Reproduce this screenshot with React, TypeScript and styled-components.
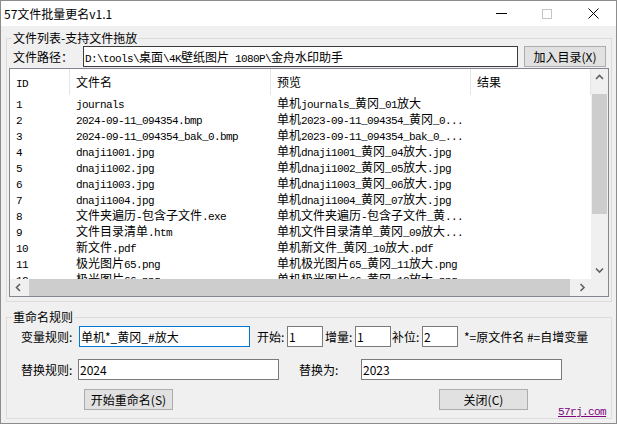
import styled, { createGlobalStyle } from "styled-components";

const GlobalStyle = createGlobalStyle`
  html, body {
    margin: 0;
    padding: 0;
    background: #fff;
  }
  body {
    font-family: "Noto Sans CJK SC", "Noto Sans", sans-serif;
    font-size: 12px;
    color: #000;
  }
  * {
    box-sizing: border-box;
  }
`;

const CJK_RE = /([\u3000-\u9fff\uff00-\uffef]+)/;

const Window = styled.div`
  width: 617px;
  height: 424px;
  border: 1px solid #8c8c8c;
  background: #f0f0f0;
  display: flex;
  flex-direction: column;
  overflow: hidden;
`;

const TitleBar = styled.div`
  height: 25px;
  flex: none;
  background: #fff;
  display: flex;
  align-items: center;
  padding-left: 3px;
`;

const Title = styled.div`
  flex: 1;
  font-size: 12px;
  line-height: 25px;
`;

const Ctrl = styled.div`
  width: 46px;
  height: 25px;
  display: flex;
  align-items: center;
  justify-content: center;
`;

const Body = styled.div`
  flex: 1;
  display: flex;
  flex-direction: column;
  padding: 5px 4px 4px 5px;
`;

const Group = styled.fieldset<{ $mt?: number }>`
  margin: ${(p) => p.$mt ?? 0}px 0 0;
  padding: 0 1px;
  min-width: 0;
  border: 1px solid #dcdcdc;
`;

const Legend = styled.legend`
  margin-left: 4px;
  padding: 0 1px;
  font-size: 12px;
  line-height: 14px;
`;

const Row = styled.div<{ $mt: number; $pl?: number; $h?: number }>`
  display: flex;
  align-items: center;
  height: ${(p) => p.$h ?? 21}px;
  margin-top: ${(p) => p.$mt}px;
  padding-left: ${(p) => p.$pl ?? 0}px;
`;

const Label = styled.span<{ $w?: number; $ml?: number }>`
  flex: none;
  width: ${(p) => (p.$w ? `${p.$w}px` : "auto")};
  margin-left: ${(p) => p.$ml ?? 0}px;
  line-height: 21px;
  white-space: nowrap;
`;

const PathField = styled.div`
  width: 435px;
  height: 21px;
  border: 1px solid #3c3c3c;
  background: #fff;
  padding: 0 1px;
  line-height: 19px;
  white-space: nowrap;
  overflow: hidden;
`;

const Edit = styled.input<{ $w: number; $ml?: number; $focus?: boolean }>`
  flex: none;
  width: ${(p) => p.$w}px;
  height: 21px;
  margin: 0 0 0 ${(p) => p.$ml ?? 0}px;
  padding: 0 1px;
  border: 1px solid ${(p) => (p.$focus ? "#0078d7" : "#7a7a7a")};
  background: #fff;
  font-family: "Noto Sans CJK SC", sans-serif;
  font-size: 12px;
  color: #000;
  outline: none;
`;

const Button = styled.button<{ $w: number; $ml?: number }>`
  flex: none;
  width: ${(p) => p.$w}px;
  height: 21px;
  margin-left: ${(p) => p.$ml ?? 0}px;
  padding: 0;
  border: 1px solid #adadad;
  background: #e1e1e1;
  font-family: "Noto Sans CJK SC", sans-serif;
  font-size: 12px;
  color: #000;
`;

const Cjk = styled.span`
  font-family: "Noto Sans CJK SC", sans-serif;
  font-size: 12px;
  letter-spacing: 0;
`;

const Mono = styled.span`
  font-family: "Liberation Mono", monospace;
  font-size: 11px;
  letter-spacing: -0.6px;
`;

const ListBox = styled.div`
  margin: 1px 1px 0;
  height: 229px;
  border: 1px solid #828790;
  background: #fff;
  display: grid;
  grid-template-columns: 1fr 17px;
  grid-template-rows: 1fr 17px;
`;

const ListMain = styled.div`
  overflow: hidden;
`;

const Cols = styled.div<{ $h: number }>`
  display: grid;
  grid-template-columns: 60px 201px 200px 1fr;
  height: ${(p) => p.$h}px;
`;

const HeadCell = styled.div`
  padding-left: 6px;
  border-right: 1px solid #e5e5e5;
  line-height: 26px;
  white-space: nowrap;
  overflow: hidden;
`;

const Cell = styled.div`
  padding-left: 6px;
  line-height: 16px;
  white-space: nowrap;
  overflow: hidden;
`;

const VScroll = styled.div`
  background: #f0f0f0;
  display: flex;
  flex-direction: column;
`;

const HScroll = styled.div`
  background: #f0f0f0;
  display: flex;
  align-items: stretch;
`;

const Corner = styled.div`
  background: #f0f0f0;
`;

const ArrowBtn = styled.div<{ $size: number }>`
  flex: none;
  width: 17px;
  height: ${(p) => p.$size}px;
  display: flex;
  align-items: center;
  justify-content: center;
`;

const HArrowBtn = styled(ArrowBtn)`
  width: ${(p) => p.$size}px;
  height: 17px;
`;

const Track = styled.div`
  flex: 1;
  display: flex;
`;

const VThumb = styled.div`
  width: 15px;
  margin: 8px 1px 0;
  background: #cdcdcd;
`;

const HThumb = styled.div`
  margin-left: 2px;
  background: #cdcdcd;
`;

const Link = styled.span`
  align-self: flex-end;
  margin-left: 30px;
  font-family: "Liberation Mono", monospace;
  font-size: 11px;
  letter-spacing: -0.6px;
  line-height: 12px;
  color: #800080;
  text-decoration: underline;
`;

const Mixed = ({ text }: { text: string }) => (
  <>
    {text
      .split(CJK_RE)
      .filter(Boolean)
      .map((part, i) =>
        CJK_RE.test(part) ? <Cjk key={i}>{part}</Cjk> : <Mono key={i}>{part}</Mono>
      )}
  </>
);

const Chevron = ({ dir }: { dir: "up" | "down" | "left" | "right" }) => {
  const pts = {
    up: "1,5 4.5,1.5 8,5",
    down: "1,1.5 4.5,5 8,1.5",
    left: "5,1 1.5,4.5 5,8",
    right: "1.5,1 5,4.5 1.5,8",
  }[dir];
  const vertical = dir === "up" || dir === "down";
  return (
    <svg width={vertical ? 9 : 7} height={vertical ? 7 : 9} viewBox={vertical ? "0 0 9 7" : "0 0 7 9"}>
      <polyline points={pts} fill="none" stroke="#606060" strokeWidth="1.6" />
    </svg>
  );
};

const rows: [string, string, string][] = [
  ["1", "journals", "单机journals_黄冈_01放大"],
  ["2", "2024-09-11_094354.bmp", "单机2023-09-11_094354_黄冈_0..."],
  ["3", "2024-09-11_094354_bak_0.bmp", "单机2023-09-11_094354_bak_0_..."],
  ["4", "dnaji1001.jpg", "单机dnaji1001_黄冈_04放大.jpg"],
  ["5", "dnaji1002.jpg", "单机dnaji1002_黄冈_05放大.jpg"],
  ["6", "dnaji1003.jpg", "单机dnaji1003_黄冈_06放大.jpg"],
  ["7", "dnaji1004.jpg", "单机dnaji1004_黄冈_07放大.jpg"],
  ["8", "文件夹遍历-包含子文件.exe", "单机文件夹遍历-包含子文件_黄..."],
  ["9", "文件目录清单.htm", "单机文件目录清单_黄冈_09放大..."],
  ["10", "新文件.pdf", "单机新文件_黄冈_10放大.pdf"],
  ["11", "极光图片65.png", "单机极光图片65_黄冈_11放大.png"],
  ["12", "极光图片66.png", "单机极光图片66_黄冈_12放大.png"],
];

export default function App() {
  return (
    <>
      <GlobalStyle />
      <Window>
        <TitleBar>
          <Title>57文件批量更名v1.1</Title>
          <Ctrl>
            <svg width="11" height="11" viewBox="0 0 11 11">
              <line x1="0" y1="5.5" x2="11" y2="5.5" stroke="#000" strokeWidth="1" />
            </svg>
          </Ctrl>
          <Ctrl>
            <svg width="10" height="10" viewBox="0 0 10 10">
              <rect x="0.5" y="0.5" width="9" height="9" fill="none" stroke="#c4c4c4" strokeWidth="1" />
            </svg>
          </Ctrl>
          <Ctrl>
            <svg width="11" height="11" viewBox="0 0 11 11">
              <path d="M0.5 0.5 L10.5 10.5 M10.5 0.5 L0.5 10.5" stroke="#000" strokeWidth="1" />
            </svg>
          </Ctrl>
        </TitleBar>

        <Body>
          <Group>
            <Legend>文件列表-支持文件拖放</Legend>
            <Row $mt={1} $pl={5}>
              <Label $w={70}>文件路径：</Label>
              <PathField>
                <Mixed text="D:\tools\桌面\4K壁纸图片 1080P\金舟水印助手" />
              </PathField>
              <Button $w={82} $ml={6}>加入目录(X)</Button>
            </Row>
            <ListBox>
              <ListMain>
                <Cols $h={26}>
                  <HeadCell><Mono>ID</Mono></HeadCell>
                  <HeadCell>文件名</HeadCell>
                  <HeadCell>预览</HeadCell>
                  <HeadCell>结果</HeadCell>
                </Cols>
                {rows.map(([id, name, preview]) => (
                  <Cols $h={16} key={id}>
                    <Cell><Mono>{id}</Mono></Cell>
                    <Cell><Mixed text={name} /></Cell>
                    <Cell><Mixed text={preview} /></Cell>
                    <Cell />
                  </Cols>
                ))}
              </ListMain>
              <VScroll>
                <ArrowBtn $size={17}><Chevron dir="up" /></ArrowBtn>
                <Track>
                  <VThumb style={{ height: 120 }} />
                </Track>
                <ArrowBtn $size={17}><Chevron dir="down" /></ArrowBtn>
              </VScroll>
              <HScroll>
                <HArrowBtn $size={17}><Chevron dir="left" /></HArrowBtn>
                <Track>
                  <HThumb style={{ width: 541 }} />
                </Track>
                <HArrowBtn $size={17}><Chevron dir="right" /></HArrowBtn>
              </HScroll>
              <Corner />
            </ListBox>
            <div style={{ height: 4 }} />
          </Group>

          <Group $mt={8}>
            <Legend>重命名规则</Legend>
            <Row $mt={2} $pl={13}>
              <Label $w={58}>变量规则:</Label>
              <Edit $w={171} $focus readOnly value="单机*_黄冈_#放大" />
              <Label $w={30} $ml={7}>开始:</Label>
              <Edit $w={36} readOnly value="1" />
              <Label $w={30} $ml={2}>增量:</Label>
              <Edit $w={36} readOnly value="1" />
              <Label $w={30} $ml={1}>补位:</Label>
              <Edit $w={36} readOnly value="2" />
              <Label $ml={6}>*=原文件名 #=自增变量</Label>
            </Row>
            <Row $mt={12} $pl={13}>
              <Label $w={57}>替换规则:</Label>
              <Edit $w={201} readOnly value="2024" />
              <Label $w={62} $ml={20}>替换为:</Label>
              <Edit $w={201} readOnly value="2023" />
            </Row>
            <Row $mt={9} $h={29} style={{ alignItems: "flex-start" }}>
              <Button $w={89} $ml={76}>开始重命名(S)</Button>
              <Button $w={89} $ml={266}>关闭(C)</Button>
              <Link>57rj.com</Link>
            </Row>
          </Group>
        </Body>
      </Window>
    </>
  );
}
